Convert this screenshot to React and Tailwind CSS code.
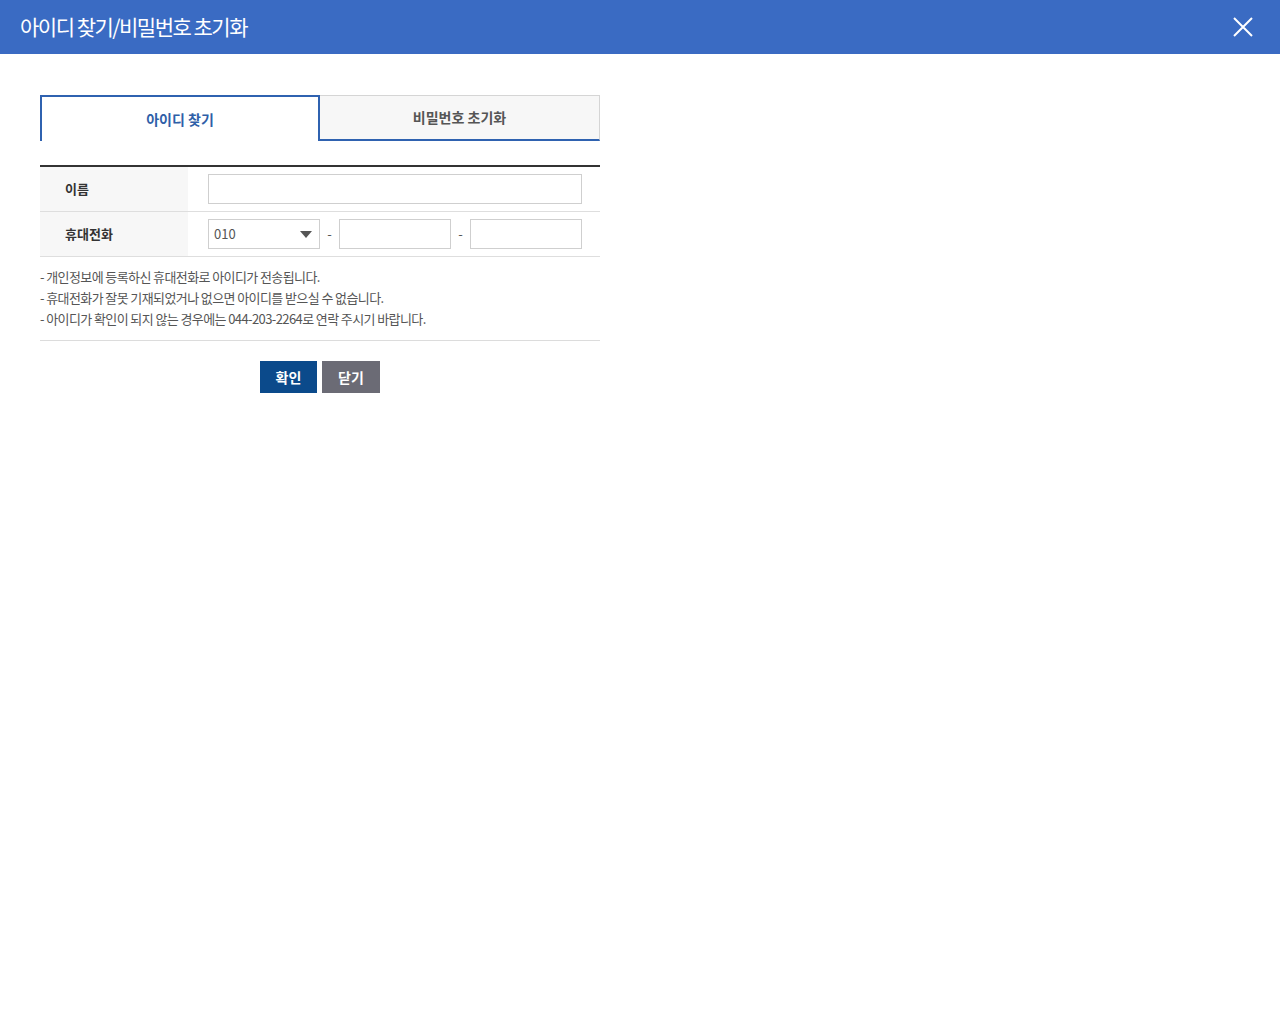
export default function App() {
  const f = { fontFamily: '"Noto Sans CJK KR", "Noto Sans", sans-serif' };
  return (
    <div style={f} className="w-[1280px] h-[1024px] bg-white">
      <div className="h-[54px] bg-[#3a6bc3] flex items-center justify-between pl-[20px] pr-[26px]">
        <h1 className="text-white text-[21px] tracking-[-1.5px] font-normal">아이디 찾기/비밀번호 초기화</h1>
        <svg width="22" height="22" viewBox="0 0 22 22"><path d="M2 2L20 20M20 2L2 20" stroke="white" strokeWidth="2" /></svg>
      </div>
      <div className="ml-[40px] mt-[41px] w-[560px]">
        <div className="flex h-[46px]">
          <div className="w-[280px] border-2 border-b-0 border-[#2f62b0] bg-white flex items-center justify-center text-[14px] font-bold text-[#2f5fa8]">아이디 찾기</div>
          <div className="flex-1 bg-[#f7f7f7] border-t border-r border-[#d5d5d5] border-b-2 border-b-[#2f62b0] flex items-center justify-center text-[14px] font-bold text-[#555]">비밀번호 초기화</div>
        </div>
        <div className="mt-[24px] border-t-2 border-[#333]">
          <div className="flex h-[45px] border-b border-[#dedede]">
            <div className="w-[148px] bg-[#f7f7f7] flex items-center pl-[25px] text-[13px] font-bold text-[#333]">이름</div>
            <div className="flex items-center pl-[20px]">
              <div className="w-[374px] h-[30px] border border-[#cfcfcf]" />
            </div>
          </div>
          <div className="flex h-[45px] border-b border-[#dedede]">
            <div className="w-[148px] bg-[#f7f7f7] flex items-center pl-[25px] text-[13px] font-bold text-[#333]">휴대전화</div>
            <div className="flex items-center pl-[20px] text-[13px] text-[#555]">
              <div className="w-[112px] h-[30px] border border-[#cfcfcf] flex items-center justify-between pl-[5px] pr-[7px]">
                <span>010</span>
                <svg width="12" height="7" viewBox="0 0 12 7"><path d="M0 0H12L6 7Z" fill="#555" /></svg>
              </div>
              <span className="w-[19px] text-center">-</span>
              <div className="w-[112px] h-[30px] border border-[#cfcfcf]" />
              <span className="w-[19px] text-center">-</span>
              <div className="w-[112px] h-[30px] border border-[#cfcfcf]" />
            </div>
          </div>
        </div>
        <div className="pt-[9px] pb-[11px] border-b border-[#dcdcdc] text-[13px] leading-[21px] text-[#555] tracking-[-0.6px]">
          <p>- 개인정보에 등록하신 휴대전화로 아이디가 전송됩니다.</p>
          <p>- 휴대전화가 잘못 기재되었거나 없으면 아이디를 받으실 수 없습니다.</p>
          <p>- 아이디가 확인이 되지 않는 경우에는 044-203-2264로 연락 주시기 바랍니다.</p>
        </div>
        <div className="flex justify-center gap-[5px] mt-[20px]">
          <button className="w-[57px] h-[32px] bg-[#0b4a8b] text-white text-[14px] font-bold">확인</button>
          <button className="w-[58px] h-[32px] bg-[#6b6b75] text-white text-[14px] font-bold">닫기</button>
        </div>
      </div>
    </div>
  );
}
